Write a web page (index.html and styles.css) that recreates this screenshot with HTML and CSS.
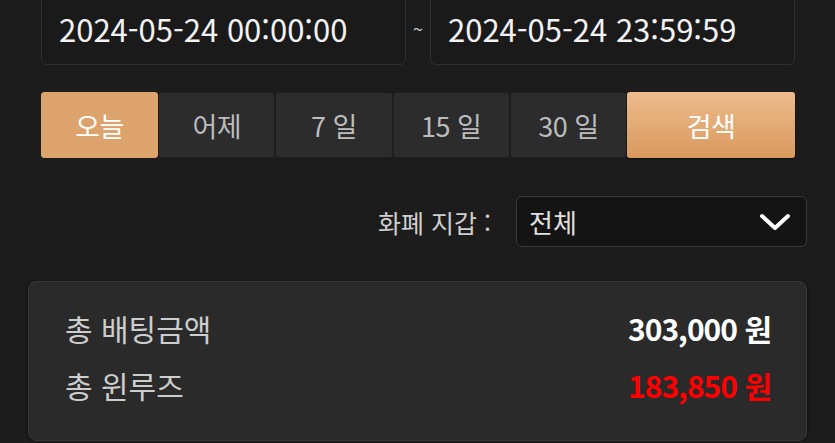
FILE: index.html
```html
<!DOCTYPE html>
<html lang="ko">
<head>
  <meta charset="UTF-8" />
  <meta name="viewport" content="width=device-width, initial-scale=1" />
  <title>베팅 내역</title>
  <link rel="stylesheet" href="styles.css">
</head>
<body>
  <div class="page">
    <div class="range">
      <div class="date-box">2024-05-24 00:00:00</div>
      <span class="tilde">~</span>
      <div class="date-box">2024-05-24 23:59:59</div>
    </div>

    <div class="periods">
      <button class="period active">오늘</button>
      <button class="period">어제</button>
      <button class="period">7 일</button>
      <button class="period">15 일</button>
      <button class="period">30 일</button>
      <button class="search">검색</button>
    </div>

    <div class="filter">
      <label for="wallet">화폐 지갑 :</label>
      <div class="select" id="wallet">
        <span>전체</span>
        <svg width="34" height="20" viewBox="0 0 34 20">
          <path d="M4 4 L17 16 L30 4" fill="none" stroke="#fff" stroke-width="4" stroke-linecap="round" stroke-linejoin="round" />
        </svg>
      </div>
    </div>

    <div class="summary">
      <div class="row">
        <span class="label">총 배팅금액</span>
        <span class="value">303,000 원</span>
      </div>
      <div class="row">
        <span class="label">총 윈루즈</span>
        <span class="value red">183,850 원</span>
      </div>
    </div>
  </div>
</body>
</html>
```

FILE: styles.css
```css
body {
  background-color: #1c1c1c;
  color: #fff;
  font-family: "Noto Sans CJK KR", "Noto Sans", sans-serif;
  margin: 0; padding: 0;
  overflow: hidden;
}
.page {
  padding: 0 28px;
}
.range {
  display: flex;
  align-items: center;
  margin: -10px 12px 0 13px;
}
.date-box {
  flex: 1;
  height: 75px;
  display: flex;
  align-items: center;
  padding-left: 17px;
  padding-top: 2px;
  box-sizing: border-box;
  background-color: #1a1a1a;
  border: 1px solid #2e2e2e;
  border-radius: 6px;
  font-size: 31px;
  color: #f2f2f2;
}
.tilde {
  width: 24px;
  text-align: center;
  font-size: 18px;
  color: #ccc;
}
.periods {
  display: grid;
  grid-template-columns: repeat(5, 1fr) 168px;
  margin: 27px 12px 0 13px;
  height: 66px;
}
.periods button {
  font-family: inherit;
  font-size: 27px;
  letter-spacing: -0.5px;
  border-radius: 3px;
  cursor: pointer;
  padding: 0;
}
.period {
  background-color: #2c2c2c;
  color: #bcbcbc;
  border: 1px solid #1e1e1e;
}
.period.active {
  background-color: #dca36d;
  color: #fff;
  border-color: #dca36d;
}
.search {
  background: linear-gradient(#ecbb8c, #d99a5d);
  color: #fff;
  border: none;
  box-shadow: 0 1px 2px rgba(0, 0, 0, 0.5);
}
.filter {
  display: flex;
  justify-content: flex-end;
  align-items: center;
  gap: 25px;
  margin-top: 38px;
}
.filter label {
  font-size: 25px;
  color: #cfcfcf;
}
.select {
  width: 291px;
  height: 51px;
  box-sizing: border-box;
  display: flex;
  align-items: center;
  justify-content: space-between;
  padding: 0 14px 0 12px;
  background-color: #141414;
  border: 1px solid #3a3a3a;
  border-radius: 6px;
  font-size: 26px;
  color: #e0e0e0;
}
.summary {
  margin-top: 34px;
  height: 160px;
  box-sizing: border-box;
  padding: 17px 35px 0 36px;
  background-color: #2a2a2a;
  border: 1px solid #383838;
  border-radius: 8px;
  box-shadow: 0 1px 3px rgba(0, 0, 0, 0.6);
}
.row {
  display: flex;
  justify-content: space-between;
  align-items: center;
  height: 57px;
  font-size: 30px;
}
.label {
  color: #cdcdcd;
}
.value {
  font-weight: bold;
  letter-spacing: -1px;
  color: #fff;
}
.value.red {
  color: #ff0000;
}
```
